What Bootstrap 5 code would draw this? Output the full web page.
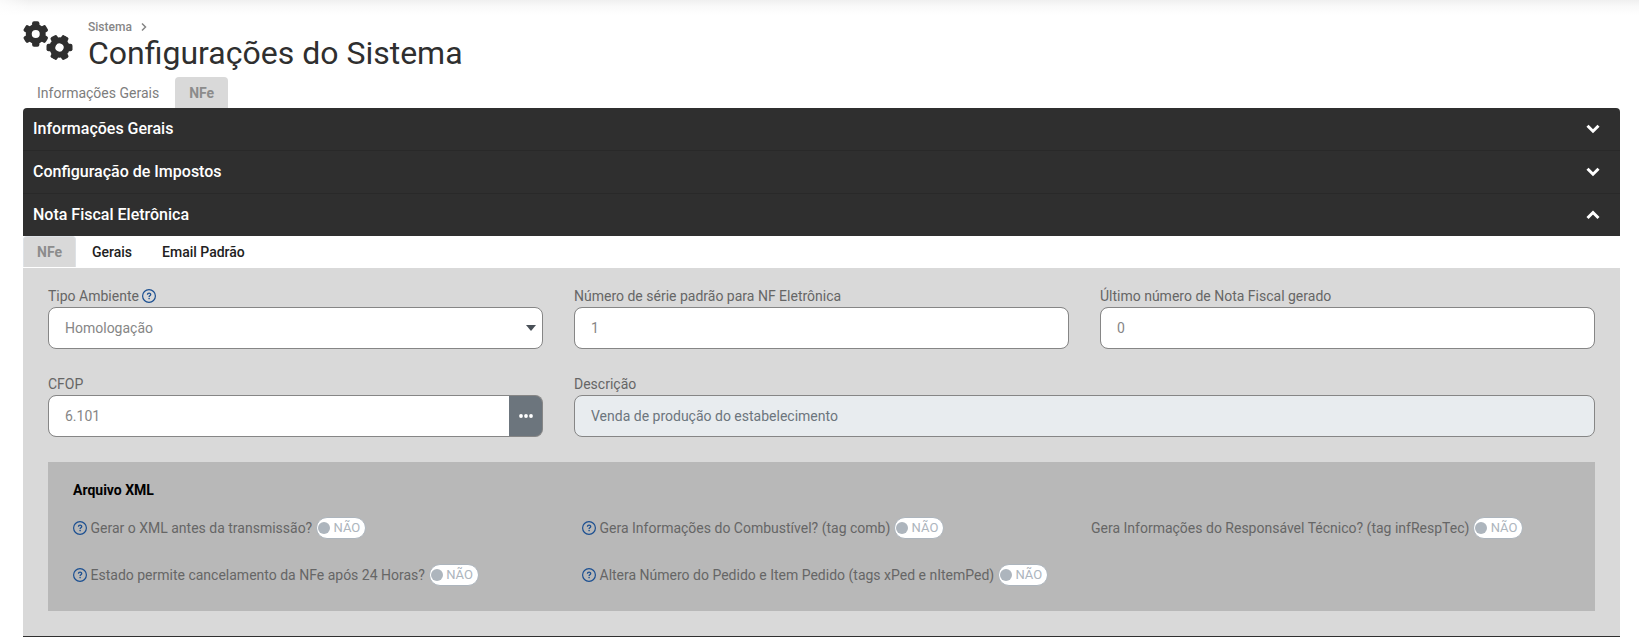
<!DOCTYPE html>
<html lang="pt-BR">

<head>
  <meta charset="UTF-8">
  <meta name="viewport" content="width=device-width, initial-scale=1.0">
  <title>Configurações do Sistema</title>
  <link href="https://cdn.jsdelivr.net/npm/bootstrap@5.3.0/dist/css/bootstrap.min.css" rel="stylesheet">
  <style>
    body {
      font-family: Roboto, "Liberation Sans", sans-serif;
      font-size: 14px;
      line-height: 20px;
      color: #2f2f2f;
      height: 637px;
      overflow: hidden;
    }

    .top-shadow {
      height: 19px;
      background: linear-gradient(90deg, rgba(255, 255, 255, .7), rgba(255, 255, 255, 0) 30px), linear-gradient(#f0f0f0, #f9f9f9 6px, #fff 15px);
    }
    .page { padding: 0 19px 0 23px; }
    .page-head { height: 58px; }
    .gears { width: 50px; height: 40px; margin: 2px 15px 0 0; }
    .crumb { font-size: 12px; line-height: 16px; font-weight: 500; color: #868686; }
    .page-title { font-size: 32px; line-height: 36px; font-weight: 400; }

    .tabs .nav-link {
      height: 31px;
      padding: 6px 14px 0;
      color: #7d7d7d;
      border: 0;
      border-radius: 4px 4px 0 0;
    }
    .tabs .nav-link.active { background: #d9d9d9; color: #8c8c8c; font-weight: 700; }
    .tabs-inner { height: 32px; gap: 2px; }
    .tabs-inner .nav-link { color: #212121; font-weight: 500; }
    .tabs-inner .nav-link.active { padding: 5px 13px 0; border: 1px solid #dee2e6; border-bottom: 0; }

    .acc { border-radius: 4px 4px 0 0; background: #2f2f2f; }
    .acc-item {
      height: 43px;
      padding: 0 20px 1px 10px;
      color: #fff;
      font-size: 16px;
      font-weight: 500;
      border-bottom: 1px solid #292929;
    }
    .acc-item:last-child { height: 42px; padding-bottom: 0; border-bottom: 0; }

    .panel { height: 368px; padding: 18px 25px 0; background: #d9d9d9; }
    .panel .row { --bs-gutter-x: 31px; }
    .panel .row + .row { margin-top: 25px; }
    .panel label { color: #666; height: 21px; }
    .panel .form-control, .panel .form-select {
      height: 42px;
      padding: 0 16px;
      border: 1px solid #868686;
      border-radius: 8px;
      font-size: 14px;
      color: #868686;
      background-color: #fff;
    }
    .panel .form-control:disabled { background: #e8ecef; color: #6c757d; }
    .panel .form-select { background-image: none; }
    .caret {
      position: absolute;
      right: 22px;
      bottom: 18px;
      border: 5.5px solid transparent;
      border-top: 6px solid #495057;
      border-bottom: 0;
    }
    .btn-more { width: 34px; padding: 0 0 0 2px; background: #6c757d; border: 1px solid #868686; border-left: 0; border-radius: 8px; }

    .xml-box { height: 149px; margin-top: 25px; padding: 18px 25px 0; background: #b8b8b8; }
    .xml-title { color: #000; font-weight: 700; }
    .opts { display: grid; grid-template-columns: repeat(3, 509px); grid-auto-rows: 22px; row-gap: 25px; margin-top: 17px; color: #666; white-space: nowrap; }
    .help { width: 14px; height: 14px; flex: none; margin-right: 3.5px; }
    label .help { margin: 3px 0 0 3px; }
    .pill { width: 50px; height: 22px; margin-left: 4px; padding: 0 5px 0 1px; border: 1px solid #adb5bd; border-radius: 11px; background: #fff; color: #adb5bd; font-size: 13px; }
    .pill::before { content: ""; width: 12px; height: 12px; border-radius: 50%; background: #adb5bd; }
    .foot-line { height: 1px; background: #2f2f2f; }
  </style>
</head>

<body>
  <svg class="d-none">
    <symbol id="help" viewBox="0 0 14 14">
      <circle cx="7" cy="7" r="6.4" fill="none" stroke="#1b4f91" stroke-width="1.2" />
      <path d="M5.4 5.7c.1-2 3.3-2 3.3-.1 0 1.2-1.6 1.1-1.6 2.3" fill="none" stroke="#1b4f91" stroke-width="1.3" />
      <circle cx="7.1" cy="9.6" r=".8" fill="#1b4f91" />
    </symbol>
    <symbol id="down" viewBox="0 0 14 10">
      <path d="M1.5 1.7 7 7.2l5.5-5.5" fill="none" stroke="#fff" stroke-width="3" />
    </symbol>
    <symbol id="up" viewBox="0 0 14 10">
      <path d="M1.5 8 7 2.5 12.5 8" fill="none" stroke="#fff" stroke-width="3" />
    </symbol>
    <symbol id="gear" viewBox="-13 -13 26 26">
      <g fill="#2f2f2f">
        <rect x="-3.7" y="-13" width="7.4" height="26" rx="2" />
        <rect x="-3.7" y="-13" width="7.4" height="26" rx="2" transform="rotate(60)" />
        <rect x="-3.7" y="-13" width="7.4" height="26" rx="2" transform="rotate(120)" />
        <circle r="10.2" />
      </g>
      <circle r="4.1" fill="#fff" />
    </symbol>
  </svg>

  <div class="top-shadow"></div>
  <div class="page">
    <header class="page-head d-flex">
      <svg class="gears" viewBox="0 0 50 40">
        <use href="#gear" x="0" y="0" width="25.5" height="26" />
        <use href="#gear" x="-13" y="-13" width="26" height="26" transform="translate(36.5 26.5) rotate(30)" />
      </svg>
      <div>
        <div class="crumb d-flex align-items-center">Sistema
          <svg class="ms-2" width="8" height="10" viewBox="0 0 8 10"><path d="M2 1.5 5.5 5 2 8.5" fill="none" stroke="#868686" stroke-width="1.5" /></svg>
        </div>
        <h1 class="page-title mb-0">Configurações do Sistema</h1>
      </div>
    </header>

    <ul class="nav tabs">
      <li class="nav-item me-1"><a class="nav-link me-1 pe-2" href="#">Informações Gerais</a></li>
      <li class="nav-item"><a class="nav-link active" href="#">NFe</a></li>
    </ul>

    <div class="acc">
      <div class="acc-item d-flex align-items-center justify-content-between">Informações Gerais<svg width="14" height="10"><use href="#down" /></svg></div>
      <div class="acc-item d-flex align-items-center justify-content-between">Configuração de Impostos<svg width="14" height="10"><use href="#down" /></svg></div>
      <div class="acc-item d-flex align-items-center justify-content-between">Nota Fiscal Eletrônica<svg width="14" height="10"><use href="#up" /></svg></div>
    </div>

    <ul class="nav tabs tabs-inner">
      <li class="nav-item"><a class="nav-link active" href="#">NFe</a></li>
      <li class="nav-item"><a class="nav-link" href="#">Gerais</a></li>
      <li class="nav-item"><a class="nav-link" href="#">Email Padrão</a></li>
    </ul>

    <div class="panel">
      <div class="row">
        <div class="col-4 position-relative">
          <label for="tipoAmbiente" class="d-flex align-items-start">Tipo Ambiente<svg class="help"><use href="#help" /></svg></label>
          <select class="form-select" id="tipoAmbiente">
            <option>Homologação</option>
          </select>
          <span class="caret"></span>
        </div>
        <div class="col-4">
          <label for="serie" class="d-block">Número de série padrão para NF Eletrônica</label>
          <input type="text" class="form-control" id="serie" value="1">
        </div>
        <div class="col-4">
          <label for="ultimo" class="d-block">Último número de Nota Fiscal gerado</label>
          <input type="text" class="form-control" id="ultimo" value="0">
        </div>
      </div>
      <div class="row">
        <div class="col-4">
          <label for="cfop" class="d-block">CFOP</label>
          <div class="input-group">
            <input type="text" class="form-control" id="cfop" value="6.101">
            <button class="btn btn-more" type="button">
              <svg class="d-block mx-auto" width="14" height="4" fill="#fff"><circle cx="2" cy="2" r="1.9" /><circle cx="7" cy="2" r="1.9" /><circle cx="12" cy="2" r="1.9" /></svg>
            </button>
          </div>
        </div>
        <div class="col-8">
          <label for="descricao" class="d-block">Descrição</label>
          <input type="text" class="form-control" id="descricao" value="Venda de produção do estabelecimento" disabled>
        </div>
      </div>

      <div class="xml-box">
        <div class="xml-title">Arquivo XML</div>
        <div class="opts">
          <div class="d-flex align-items-center"><svg class="help"><use href="#help" /></svg>Gerar o XML antes da transmissão?<span class="pill d-flex align-items-center justify-content-between">NÃO</span></div>
          <div class="d-flex align-items-center"><svg class="help"><use href="#help" /></svg>Gera Informações do Combustível? (tag comb)<span class="pill d-flex align-items-center justify-content-between">NÃO</span></div>
          <div class="d-flex align-items-center">Gera Informações do Responsável Técnico? (tag infRespTec)<span class="pill d-flex align-items-center justify-content-between">NÃO</span></div>
          <div class="d-flex align-items-center"><svg class="help"><use href="#help" /></svg>Estado permite cancelamento da NFe após 24 Horas?<span class="pill d-flex align-items-center justify-content-between">NÃO</span></div>
          <div class="d-flex align-items-center"><svg class="help"><use href="#help" /></svg>Altera Número do Pedido e Item Pedido (tags xPed e nItemPed)<span class="pill d-flex align-items-center justify-content-between">NÃO</span></div>
        </div>
      </div>
    </div>
    <div class="foot-line"></div>
  </div>
  <script src="https://cdn.jsdelivr.net/npm/bootstrap@5.3.0/dist/js/bootstrap.bundle.min.js"></script>
</body>

</html>
